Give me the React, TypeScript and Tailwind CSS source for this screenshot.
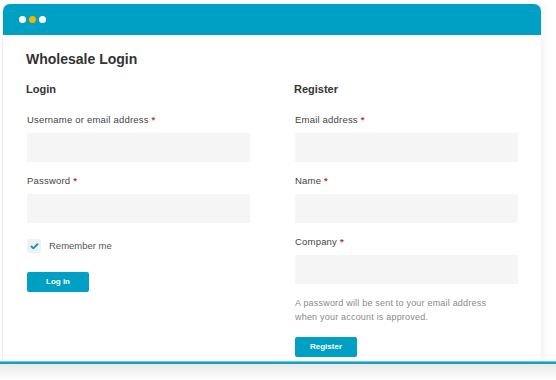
import { Check } from "lucide-react";

type FieldProps = {
  label: string;
};

function Field({ label }: FieldProps) {
  return (
    <div className="flex flex-col">
      <label className="h-[14px] text-[9.5px] leading-[14px] text-[#444] tracking-[0.2px]">
        {label} <span className="text-[#c0392b] font-bold">*</span>
      </label>
      <div className="mt-[6px] h-[29px] w-[223px] bg-[#f5f5f5]" />
    </div>
  );
}

export default function App() {
  return (
    <div
      className="w-[556px] h-[380px] overflow-hidden bg-white flex flex-col"
      style={{ fontFamily: '"Liberation Sans", Arial, sans-serif' }}
    >
      <div className="ml-[2px] mt-[4px] w-[539px] h-[357px] shrink-0 flex flex-col rounded-t-[7px] shadow-[3px_0_6px_rgba(0,0,0,0.06)] border-l border-[#eeeeee]">
        <div className="h-[31px] shrink-0 bg-[#00a0c4] rounded-t-[7px] flex items-center gap-[3px] pl-[16px]">
          <span className="w-[7px] h-[7px] rounded-full bg-white" />
          <span className="w-[7px] h-[7px] rounded-full bg-[#f7b500]" />
          <span className="w-[7px] h-[7px] rounded-full bg-white" />
        </div>
        <div className="flex-1 min-h-0 bg-white pl-[23px] pt-[15px]">
          <h1 className="text-[14px] leading-[18px] font-bold text-[#333]">Wholesale Login</h1>
          <div className="mt-[14px] flex">
            <div className="w-[268px] flex flex-col">
              <h2 className="text-[11px] leading-[14px] font-bold text-[#333]">Login</h2>
              <div className="mt-[17px] ml-[1px] flex flex-col gap-[12px]">
                <Field label="Username or email address" />
                <Field label="Password" />
              </div>
              <div className="mt-[16px] ml-[1px] flex items-center gap-[8px]">
                <div className="w-[14px] h-[14px] bg-[#f0f0f0] rounded-[2px] flex items-center justify-center">
                  <Check className="w-[9px] h-[9px] text-[#0a9bc4]" strokeWidth={5} />
                </div>
                <span className="text-[9.5px] text-[#555]">Remember me</span>
              </div>
              <button className="mt-[19px] ml-[1px] w-[62px] h-[20px] rounded-[2px] bg-[#00a0c4] text-white text-[8px] font-bold">
                Log in
              </button>
            </div>
            <div className="w-[230px] flex flex-col">
              <h2 className="text-[11px] leading-[14px] font-bold text-[#333]">Register</h2>
              <div className="mt-[17px] ml-[1px] flex flex-col gap-[12px]">
                <Field label="Email address" />
                <Field label="Name" />
                <Field label="Company" />
              </div>
              <p className="mt-[12px] ml-[1px] text-[9px] leading-[14px] text-[#8a8a8a] tracking-[0.2px]">
                A password will be sent to your email address
                <br />
                when your account is approved.
              </p>
              <button className="mt-[13px] ml-[1px] w-[62px] h-[20px] rounded-[2px] bg-[#00a0c4] text-white text-[8px] font-bold">
                Register
              </button>
            </div>
          </div>
        </div>
      </div>
      <div className="h-[1px] shrink-0 bg-[#5fd0ea]" />
      <div className="h-[2px] shrink-0 bg-[#1a9ec0]" />
      <div className="flex-1 bg-gradient-to-b from-[#e9e9e9] to-white" />
    </div>
  );
}
